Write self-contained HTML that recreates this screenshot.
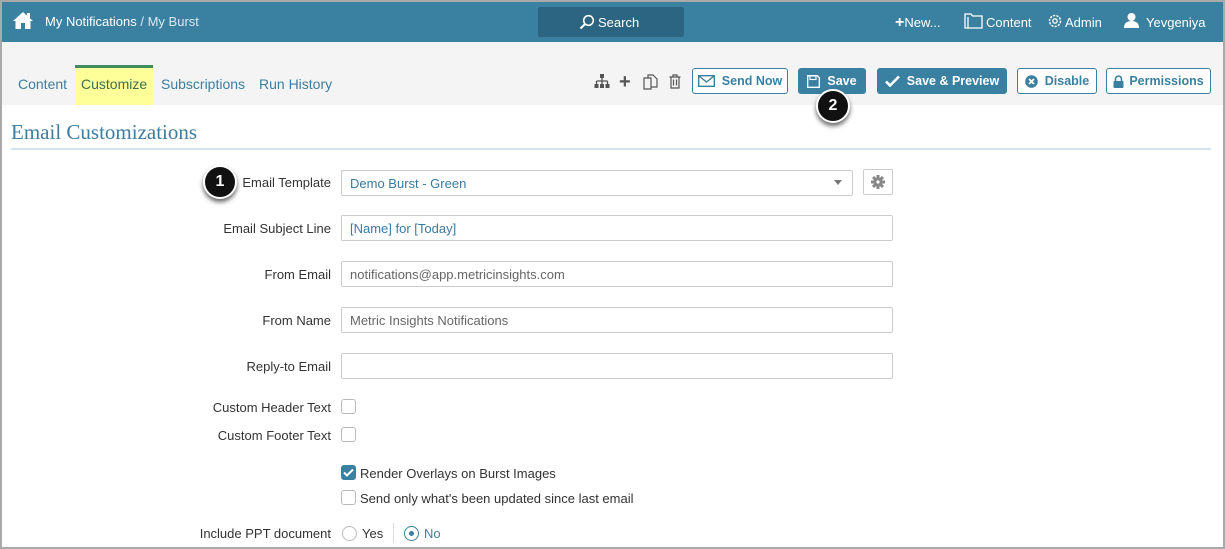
<!DOCTYPE html>
<html><head><style>
*{box-sizing:border-box;margin:0;padding:0}
body{width:1225px;height:549px;position:relative;overflow:hidden;background:#fff;font-family:"Liberation Sans",sans-serif;font-size:13px;color:#333}
.a{position:absolute}
#frame{left:0;top:0;width:1225px;height:549px;border:2px solid #a9a9a9;z-index:10;pointer-events:none}
.top{left:2px;top:2px;width:1221px;height:40px;background:#3a80a1}
.tw{color:#fff;font-size:13px}
.sub{left:2px;top:42px;width:1221px;height:63px;background:#f4f4f4}
.tab{font-size:14px;color:#3d7da0;top:76px}
.btn{top:68px;height:26px;border:1px solid #3a80a1;border-radius:3px;color:#3a80a1;font-weight:bold;font-size:12.5px;display:flex;align-items:center;justify-content:center;gap:7px;background:#fff}
.btn.f{background:#3a80a1;color:#fff}
.lbl{right:894px;font-size:13px;color:#333;text-align:right;white-space:nowrap}
.inp{left:341px;width:552px;height:26px;border:1px solid #ccc;border-radius:2px;padding:5px 8px;font-size:13px;color:#3a7aa0}
.inp.g{color:#666}
.cb{width:15px;height:15px;border:1px solid #bbb;border-radius:3px;background:#fff}
.badge{width:34px;height:34px;border-radius:50%;background:#111;border:2px solid #fff;box-shadow:0 3px 5px rgba(0,0,0,.6);color:#fff;font-weight:bold;font-size:16px;display:flex;align-items:center;justify-content:center}
</style></head><body>
<div class="a" id="frame"></div>
<div class="a top"></div>
<svg class="a" style="left:12px;top:11px" width="22" height="19" viewBox="0 0 22 19"><path d="M11 1 L1 10 L3.5 10 L3.5 18 L9 18 L9 12 L13 12 L13 18 L18.5 18 L18.5 10 L21 10 Z" fill="#fff"/><rect x="15" y="2" width="3" height="5" fill="#fff"/></svg>
<div class="a tw" style="left:45px;top:14px">My Notifications <span style="color:#dde8ef">/ My Burst</span></div>
<div class="a" style="left:538px;top:7px;width:146px;height:30px;background:#2c6582;border-radius:2px"></div>
<svg class="a" style="left:579px;top:14px" width="16" height="16" viewBox="0 0 16 16"><circle cx="9.5" cy="6.5" r="4.8" fill="none" stroke="#fff" stroke-width="1.6"/><path d="M6 10 L1.5 14.5" stroke="#fff" stroke-width="2"/></svg>
<div class="a tw" style="left:598px;top:15px">Search</div>
<div class="a tw" style="left:895px;top:14px"><b style="font-size:16px">+</b>New...</div>
<svg class="a" style="left:964px;top:13px" width="19" height="16" viewBox="0 0 19 16"><path d="M1 1h6l1.5 2H18v12H1z M4 4v11" fill="none" stroke="#fff" stroke-width="1.3"/></svg>
<div class="a tw" style="left:986px;top:15px">Content</div>
<svg class="a" style="left:1047px;top:13px" width="16" height="16" viewBox="0 0 16 16"><circle cx="8" cy="8" r="5.5" fill="none" stroke="#fff" stroke-width="1.5" stroke-dasharray="2.2 1.2"/><circle cx="8" cy="8" r="2.2" fill="none" stroke="#fff" stroke-width="1.3"/></svg>
<div class="a tw" style="left:1065px;top:15px">Admin</div>
<svg class="a" style="left:1124px;top:12px" width="15" height="16" viewBox="0 0 15 16"><circle cx="7.5" cy="5" r="4" fill="#fff"/><path d="M0 16 Q0 9 7.5 9 Q15 9 15 16Z" fill="#fff"/></svg>
<div class="a tw" style="left:1146px;top:15px">Yevgeniya</div>

<div class="a sub"></div>
<div class="a" style="left:75px;top:65px;width:78px;height:40px;background:#ffff99;border-top:3px solid #3f8a5e"></div>
<div class="a tab" style="left:18px">Content</div>
<div class="a tab" style="left:81px;color:#3a7050">Customize</div>
<div class="a tab" style="left:161px">Subscriptions</div>
<div class="a tab" style="left:259px">Run History</div>

<svg class="a" style="left:594px;top:74px" width="16" height="15" viewBox="0 0 16 15"><rect x="6" y="0" width="4" height="4" fill="#555"/><path d="M8 4v3M2.5 7h11M2.5 7v3M8 7v3M13.5 7v3" stroke="#555" stroke-width="1.3" fill="none"/><rect x="0.5" y="10" width="4" height="4" fill="#555"/><rect x="6" y="10" width="4" height="4" fill="#555"/><rect x="11.5" y="10" width="4" height="4" fill="#555"/></svg>
<div class="a" style="left:619px;top:71px;font-size:20px;font-weight:bold;color:#555">+</div>
<svg class="a" style="left:643px;top:74px" width="15" height="16" viewBox="0 0 15 16"><path d="M1 4h7v11H1z M5 4V1h5l4 4v8H8" fill="none" stroke="#555" stroke-width="1.2"/></svg>
<svg class="a" style="left:669px;top:74px" width="12" height="15" viewBox="0 0 12 15"><path d="M0.5 3h11M4 3V1h4v2M2 3v11h8V3M4.5 5.5v6M7.5 5.5v6" fill="none" stroke="#555" stroke-width="1.2"/></svg>

<div class="a btn" style="left:692px;width:96px"><svg width="17" height="12" viewBox="0 0 17 12"><rect x="0.7" y="0.7" width="15.6" height="10.6" fill="none" stroke="#3a80a1" stroke-width="1.4"/><path d="M1 1l7.5 6 7.5-6" fill="none" stroke="#3a80a1" stroke-width="1.4"/></svg>Send Now</div>
<div class="a btn f" style="left:798px;width:68px"><svg width="13" height="13" viewBox="0 0 13 13"><path d="M0.7 0.7h9.5l2.1 2.1v9.5H0.7z" fill="none" stroke="#fff" stroke-width="1.3"/><rect x="3" y="1" width="6" height="3.5" fill="none" stroke="#fff" stroke-width="1.1"/></svg>Save</div>
<div class="a btn f" style="left:877px;width:130px"><svg width="15" height="12" viewBox="0 0 15 12"><path d="M1 6.5l4 4L14 1.5" fill="none" stroke="#fff" stroke-width="2.6"/></svg>Save &amp; Preview</div>
<div class="a btn" style="left:1017px;width:80px"><svg width="13" height="13" viewBox="0 0 13 13"><circle cx="6.5" cy="6.5" r="6.3" fill="#3a80a1"/><path d="M4 4l5 5M9 4l-5 5" stroke="#fff" stroke-width="1.8"/></svg>Disable</div>
<div class="a btn" style="left:1106px;width:105px;gap:5px"><svg width="11" height="13" viewBox="0 0 11 13"><path d="M2.5 6V4a3 3 0 0 1 6 0v2" fill="none" stroke="#3a80a1" stroke-width="1.6"/><rect x="0.5" y="6" width="10" height="7" rx="1" fill="#3a80a1"/></svg>Permissions</div>
<div class="a badge" style="left:816px;top:89px">2</div>

<div class="a" style="left:11px;top:120px;font-family:'Liberation Serif',serif;font-size:21px;color:#3d7da0">Email Customizations</div>
<div class="a" style="left:11px;top:148px;width:1200px;height:2px;background:#d3e3ec"></div>

<div class="a lbl" style="top:175px">Email Template</div>
<div class="a badge" style="left:203px;top:165px">1</div>
<div class="a inp" style="top:170px;width:512px">Demo Burst - Green</div>
<div class="a" style="left:834px;top:180px;border-left:4px solid transparent;border-right:4px solid transparent;border-top:5px solid #777"></div>
<div class="a" style="left:863px;top:169px;width:30px;height:26px;border:1px solid #ccc;border-radius:2px"></div>
<svg class="a" style="left:871px;top:175px" width="14" height="14" viewBox="0 0 14 14"><g fill="#888"><rect x="5.5" y="0" width="3" height="14"/><rect x="0" y="5.5" width="14" height="3"/><rect x="5.5" y="0" width="3" height="14" transform="rotate(45 7 7)"/><rect x="5.5" y="0" width="3" height="14" transform="rotate(-45 7 7)"/><circle cx="7" cy="7" r="4.6"/></g><circle cx="7" cy="7" r="1.6" fill="#fff"/></svg>

<div class="a lbl" style="top:221px">Email Subject Line</div>
<div class="a inp" style="top:215px">[Name] for [Today]</div>
<div class="a lbl" style="top:267px">From Email</div>
<div class="a inp g" style="top:261px">notifications@app.metricinsights.com</div>
<div class="a lbl" style="top:313px">From Name</div>
<div class="a inp g" style="top:307px">Metric Insights Notifications</div>
<div class="a lbl" style="top:359px">Reply-to Email</div>
<div class="a inp" style="top:353px"></div>

<div class="a lbl" style="top:400px">Custom Header Text</div>
<div class="a cb" style="left:341px;top:399px"></div>
<div class="a lbl" style="top:428px">Custom Footer Text</div>
<div class="a cb" style="left:341px;top:427px"></div>

<div class="a cb" style="left:341px;top:465px;background:#3a80a1;border-color:#3a80a1"></div>
<svg class="a" style="left:343px;top:468px" width="11" height="9" viewBox="0 0 11 9"><path d="M1 4.5l3 3L10 1.5" fill="none" stroke="#fff" stroke-width="2"/></svg>
<div class="a" style="left:360px;top:466px">Render Overlays on Burst Images</div>
<div class="a cb" style="left:341px;top:490px"></div>
<div class="a" style="left:360px;top:491px">Send only what's been updated since last email</div>

<div class="a lbl" style="top:526px">Include PPT document</div>
<div class="a" style="left:342px;top:526px;width:15px;height:15px;border:1px solid #bbb;border-radius:50%"></div>
<div class="a" style="left:362px;top:526px">Yes</div>
<div class="a" style="left:393px;top:523px;width:1px;height:20px;background:#ddd"></div>
<div class="a" style="left:404px;top:526px;width:15px;height:15px;border:1.5px solid #3a80a1;border-radius:50%"></div>
<div class="a" style="left:409px;top:531px;width:5px;height:5px;background:#3a80a1;border-radius:50%"></div>
<div class="a" style="left:424px;top:526px;color:#3a80a1">No</div>
</body></html>
